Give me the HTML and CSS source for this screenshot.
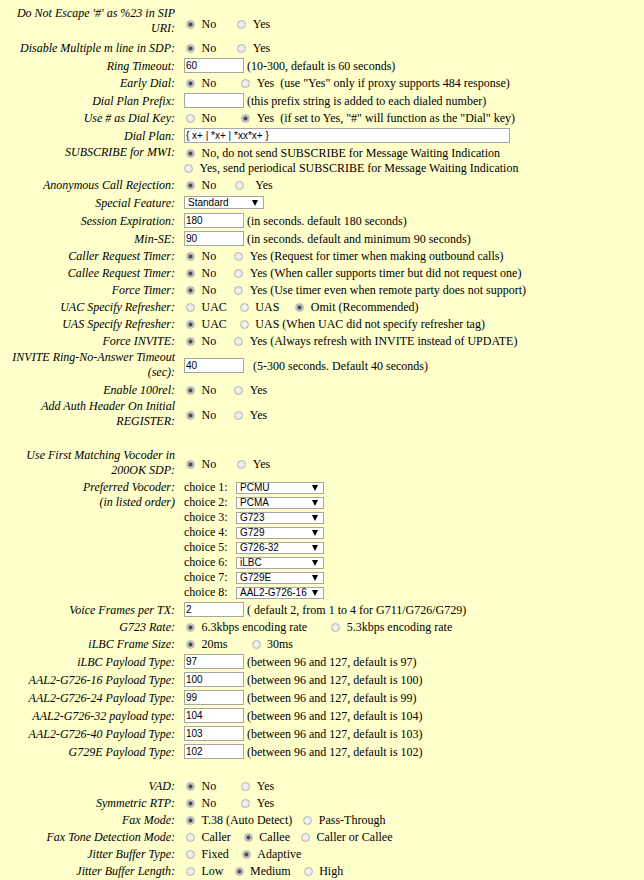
FILE: index.html
```html
<!DOCTYPE html>
<html>
<head>
<meta charset="utf-8">
<title>SIP Settings</title>
<link rel="stylesheet" href="styles.css">
</head>
<body>
<form class="cfg">
  <div class="lbl two first">Do Not Escape '#' as %23 in SIP URI:</div>
  <div class="val"><label class="opt"><input type="radio" name="r1" checked>No</label><label class="opt sp21"><input type="radio" name="r1">Yes</label></div>

  <div class="lbl">Disable Multiple m line in SDP:</div>
  <div class="val"><label class="opt"><input type="radio" name="r2" checked>No</label><label class="opt sp21"><input type="radio" name="r2">Yes</label></div>

  <div class="lbl">Ring Timeout:</div>
  <div class="val"><input class="txt" type="text" value="60"><span class="note">(10-300, default is 60 seconds)</span></div>

  <div class="lbl">Early Dial:</div>
  <div class="val"><label class="opt"><input type="radio" name="r3" checked>No</label><label class="opt sp25"><input type="radio" name="r3">Yes</label><span class="after">(use "Yes" only if proxy supports 484 response)</span></div>

  <div class="lbl">Dial Plan Prefix:</div>
  <div class="val"><input class="txt" type="text" value=""><span class="note">(this prefix string is added to each dialed number)</span></div>

  <div class="lbl">Use # as Dial Key:</div>
  <div class="val"><label class="opt"><input type="radio" name="r4">No</label><label class="opt sp25"><input type="radio" name="r4" checked>Yes</label><span class="after">(if set to Yes, "#" will function as the "Dial" key)</span></div>

  <div class="lbl">Dial Plan:</div>
  <div class="val"><input class="txt wide" type="text" value="{ x+ | *x+ | *xx*x+ }"></div>

  <div class="lbl top">SUBSCRIBE for MWI:</div>
  <div class="val stack"><label class="opt"><input type="radio" name="r5" checked>No, do not send SUBSCRIBE for Message Waiting Indication</label><label class="opt"><input type="radio" name="r5">Yes, send periodical SUBSCRIBE for Message Waiting Indication</label></div>

  <div class="lbl">Anonymous Call Rejection:</div>
  <div class="val"><label class="opt"><input type="radio" name="r6" checked>No</label><label class="opt sp19 far"><input type="radio" name="r6">Yes</label></div>

  <div class="lbl">Special Feature:</div>
  <div class="val"><span class="sel"><select class="feature"><option>Standard</option></select></span></div>

  <div class="lbl">Session Expiration:</div>
  <div class="val"><input class="txt" type="text" value="180"><span class="note">(in seconds. default 180 seconds)</span></div>

  <div class="lbl">Min-SE:</div>
  <div class="val"><input class="txt" type="text" value="90"><span class="note">(in seconds. default and minimum 90 seconds)</span></div>

  <div class="lbl">Caller Request Timer:</div>
  <div class="val"><label class="opt"><input type="radio" name="r7" checked>No</label><label class="opt sp18"><input type="radio" name="r7">Yes (Request for timer when making outbound calls)</label></div>

  <div class="lbl">Callee Request Timer:</div>
  <div class="val"><label class="opt"><input type="radio" name="r8" checked>No</label><label class="opt sp18"><input type="radio" name="r8">Yes (When caller supports timer but did not request one)</label></div>

  <div class="lbl">Force Timer:</div>
  <div class="val"><label class="opt"><input type="radio" name="r9" checked>No</label><label class="opt sp18"><input type="radio" name="r9">Yes (Use timer even when remote party does not support)</label></div>

  <div class="lbl">UAC Specify Refresher:</div>
  <div class="val"><label class="opt"><input type="radio" name="r10">UAC</label><label class="opt sp13"><input type="radio" name="r10">UAS</label><label class="opt sp16"><input type="radio" name="r10" checked>Omit (Recommended)</label></div>

  <div class="lbl">UAS Specify Refresher:</div>
  <div class="val"><label class="opt"><input type="radio" name="r11" checked>UAC</label><label class="opt sp13"><input type="radio" name="r11">UAS (When UAC did not specify refresher tag)</label></div>

  <div class="lbl">Force INVITE:</div>
  <div class="val"><label class="opt"><input type="radio" name="r12" checked>No</label><label class="opt sp18"><input type="radio" name="r12">Yes (Always refresh with INVITE instead of UPDATE)</label></div>

  <div class="lbl two">INVITE Ring-No-Answer Timeout (sec):</div>
  <div class="val"><input class="txt" type="text" value="40"><span class="note loose">(5-300 seconds. Default 40 seconds)</span></div>

  <div class="lbl">Enable 100rel:</div>
  <div class="val"><label class="opt"><input type="radio" name="r13" checked>No</label><label class="opt sp18"><input type="radio" name="r13">Yes</label></div>

  <div class="lbl two">Add Auth Header On Initial REGISTER:</div>
  <div class="val"><label class="opt"><input type="radio" name="r14" checked>No</label><label class="opt sp18"><input type="radio" name="r14">Yes</label></div>

  <div class="gap"></div>

  <div class="lbl two">Use First Matching Vocoder in 200OK SDP:</div>
  <div class="val"><label class="opt"><input type="radio" name="r15" checked>No</label><label class="opt sp21"><input type="radio" name="r15">Yes</label></div>

  <div class="lbl top">Preferred Vocoder:<br>(in listed order)</div>
  <div class="val voc">
    <span>choice 1:</span><span class="sel"><select class="codec"><option>PCMU</option></select></span>
    <span>choice 2:</span><span class="sel"><select class="codec"><option>PCMA</option></select></span>
    <span>choice 3:</span><span class="sel"><select class="codec"><option>G723</option></select></span>
    <span>choice 4:</span><span class="sel"><select class="codec"><option>G729</option></select></span>
    <span>choice 5:</span><span class="sel"><select class="codec"><option>G726-32</option></select></span>
    <span>choice 6:</span><span class="sel"><select class="codec"><option>iLBC</option></select></span>
    <span>choice 7:</span><span class="sel"><select class="codec"><option>G729E</option></select></span>
    <span>choice 8:</span><span class="sel"><select class="codec"><option>AAL2-G726-16</option></select></span>
  </div>

  <div class="lbl">Voice Frames per TX:</div>
  <div class="val"><input class="txt" type="text" value="2"><span class="note">( default 2, from 1 to 4 for G711/G726/G729)</span></div>

  <div class="lbl">G723 Rate:</div>
  <div class="val"><label class="opt"><input type="radio" name="r16" checked>6.3kbps encoding rate</label><label class="opt sp24"><input type="radio" name="r16">5.3kbps encoding rate</label></div>

  <div class="lbl">iLBC Frame Size:</div>
  <div class="val"><label class="opt"><input type="radio" name="r17" checked>20ms</label><label class="opt sp24"><input type="radio" name="r17">30ms</label></div>

  <div class="lbl">iLBC Payload Type:</div>
  <div class="val"><input class="txt" type="text" value="97"><span class="note">(between 96 and 127, default is 97)</span></div>

  <div class="lbl">AAL2-G726-16 Payload Type:</div>
  <div class="val"><input class="txt" type="text" value="100"><span class="note">(between 96 and 127, default is 100)</span></div>

  <div class="lbl">AAL2-G726-24 Payload Type:</div>
  <div class="val"><input class="txt" type="text" value="99"><span class="note">(between 96 and 127, default is 99)</span></div>

  <div class="lbl">AAL2-G726-32 payload type:</div>
  <div class="val"><input class="txt" type="text" value="104"><span class="note">(between 96 and 127, default is 104)</span></div>

  <div class="lbl">AAL2-G726-40 Payload Type:</div>
  <div class="val"><input class="txt" type="text" value="103"><span class="note">(between 96 and 127, default is 103)</span></div>

  <div class="lbl">G729E Payload Type:</div>
  <div class="val"><input class="txt" type="text" value="102"><span class="note">(between 96 and 127, default is 102)</span></div>

  <div class="gap"></div>

  <div class="lbl">VAD:</div>
  <div class="val"><label class="opt"><input type="radio" name="r18" checked>No</label><label class="opt sp25"><input type="radio" name="r18">Yes</label></div>

  <div class="lbl">Symmetric RTP:</div>
  <div class="val"><label class="opt"><input type="radio" name="r19" checked>No</label><label class="opt sp25"><input type="radio" name="r19">Yes</label></div>

  <div class="lbl">Fax Mode:</div>
  <div class="val"><label class="opt"><input type="radio" name="r20" checked>T.38 (Auto Detect)</label><label class="opt sp11"><input type="radio" name="r20">Pass-Through</label></div>

  <div class="lbl">Fax Tone Detection Mode:</div>
  <div class="val"><label class="opt"><input type="radio" name="r21">Caller</label><label class="opt sp13"><input type="radio" name="r21" checked>Callee</label><label class="opt sp11"><input type="radio" name="r21">Caller or Callee</label></div>

  <div class="lbl">Jitter Buffer Type:</div>
  <div class="val"><label class="opt"><input type="radio" name="r22">Fixed</label><label class="opt sp13"><input type="radio" name="r22" checked>Adaptive</label></div>

  <div class="lbl">Jitter Buffer Length:</div>
  <div class="val"><label class="opt"><input type="radio" name="r23">Low</label><label class="opt sp11"><input type="radio" name="r23" checked>Medium</label><label class="opt sp13"><input type="radio" name="r23">High</label></div>
</form>
</body>
</html>
```
FILE: styles.css
```css
html, body {
  background: #ffffcc;
}
body {
  margin: 8px;
  font-family: "Liberation Serif", "Times New Roman", serif;
  font-size: 12px;
  line-height: 15px;
  color: #000;
}
.cfg {
  display: grid;
  grid-template-columns: 170px 458px;
  align-items: center;
}
.lbl {
  text-align: right;
  font-style: italic;
  padding: 1px 3px 1px 0;
}
.lbl.two {
  padding: 0 3px 2px 0;
}
.lbl.two.first {
  padding: 0 3px 4px 0;
  margin-top: -2px;
}
.lbl.top {
  align-self: start;
  padding-top: 0;
}
.val {
  display: flex;
  align-items: center;
  padding: 1px 0 1px 6px;
  min-height: 15px;
  white-space: nowrap;
}
.val.stack {
  flex-direction: column;
  align-items: flex-start;
}
.gap {
  grid-column: 1 / -1;
  height: 17px;
}
.opt {
  display: inline-flex;
  align-items: center;
}
.val > .opt:first-child {
  margin-left: 2px;
}
.opt input[type="radio"] {
  -webkit-appearance: none;
  appearance: none;
  box-sizing: border-box;
  width: 9px;
  height: 9px;
  margin: 0 6.5px 0 0;
  border-radius: 50%;
  border: 1px solid #b4b4b4;
  background: radial-gradient(circle, #f4f4f4 0, #e2e2e2 100%);
  flex: none;
}
.opt input[type="radio"]:checked {
  background: radial-gradient(circle, #4d4d4d 0, #4d4d4d 1.6px, #bdbdbd 2.4px, #e4e4e4 100%);
}
.far input[type="radio"] {
  margin-right: 11px;
}
.sp11 { margin-left: 11px; }
.sp13 { margin-left: 13px; }
.sp16 { margin-left: 16px; }
.sp18 { margin-left: 18px; }
.sp19 { margin-left: 19px; }
.sp21 { margin-left: 21px; }
.sp24 { margin-left: 24px; }
.sp25 { margin-left: 25px; }
.after {
  margin-left: 6px;
}
.txt {
  box-sizing: border-box;
  width: 60px;
  height: 15px;
  margin: 0 0 1px 0;
  padding: 0 1px;
  border: 1px solid #a6a6a6;
  background: #fff;
  font-family: "Liberation Sans", Arial, sans-serif;
  font-size: 10px;
  color: #000;
  outline: none;
}
.txt.wide {
  width: 326px;
}
.note {
  margin-left: 3px;
}
.note.loose {
  margin-left: 9px;
}
.sel {
  position: relative;
  display: inline-block;
}
.sel::after {
  content: "";
  position: absolute;
  right: 6px;
  top: 50%;
  margin-top: -3px;
  border-left: 3.5px solid transparent;
  border-right: 3.5px solid transparent;
  border-top: 6px solid #000;
  pointer-events: none;
}
.sel select {
  -webkit-appearance: none;
  appearance: none;
  box-sizing: border-box;
  display: block;
  border: 1px solid #a6a6a6;
  border-radius: 0;
  background: #fff;
  font-family: "Liberation Sans", Arial, sans-serif;
  font-size: 10px;
  line-height: 10px;
  color: #000;
  padding: 0 14px 0 3px;
  outline: none;
}
.feature {
  width: 80px;
  height: 13px;
  margin: 1px 0 2px;
}
.val.voc {
  display: grid;
  grid-template-columns: 52px 88px;
  grid-auto-rows: 15px;
  align-items: center;
  padding: 0 0 1px 6px;
}
.codec {
  width: 88px;
  height: 12px;
}
```
